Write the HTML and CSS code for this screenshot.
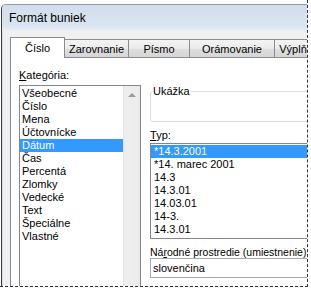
FILE: index.html
```html
<!DOCTYPE html>
<html>
  <head>
    <title>Formát buniek</title>
    <link rel="stylesheet" href="styles.css">
  </head>
  <body>
    <div class="frame">
      <div class="window">
        <div class="titlebar">Formát buniek</div>

        <div class="face">
          <div class="tabs">
            <div class="tab active tab-cislo">Číslo</div>
            <div class="tab tab-zarovnanie">Zarovnanie</div>
            <div class="tab tab-pismo">Písmo</div>
            <div class="tab tab-oramovanie">Orámovanie</div>
            <div class="tab tab-vypln">Výplň</div>
          </div>

          <div class="pane">
            <div class="col-left">
              <div class="label"><u>K</u>ategória:</div>
              <div class="listbox category">
                <ul class="items">
                  <li>Všeobecné</li>
                  <li>Číslo</li>
                  <li>Mena</li>
                  <li>Účtovnícke</li>
                  <li class="selected">Dátum</li>
                  <li>Čas</li>
                  <li>Percentá</li>
                  <li>Zlomky</li>
                  <li>Vedecké</li>
                  <li>Text</li>
                  <li>Špeciálne</li>
                  <li>Vlastné</li>
                </ul>
                <div class="scrollbar">
                  <div class="scroll-btn"><span class="arrow-up"></span></div>
                </div>
              </div>
            </div>

            <div class="col-right">
              <fieldset class="sample">
                <legend>Ukážka</legend>
              </fieldset>

              <div class="label label-typ"><u>T</u>yp:</div>
              <ul class="listbox items types">
                <li class="selected">*14.3.2001</li>
                <li>*14. marec 2001</li>
                <li>14.3</li>
                <li>14.3.01</li>
                <li>14.03.01</li>
                <li>14-3.</li>
                <li>14.3.01</li>
              </ul>

              <div class="label label-locale">Ná<u>r</u>odné prostredie (umiestnenie):</div>
              <div class="combo">slovenčina</div>
            </div>
          </div>
        </div>
      </div>
    </div>
  </body>
</html>
```

FILE: styles.css
```css
body {
  margin: 0;
  background: #fff;
  font-family: 'Liberation Sans', Arial, sans-serif;
  font-size: 11px;
  color: #000;
}

.frame {
  width: 307px;
  height: 286px;
  border-right: 1px dashed #333;
  border-bottom: 1px dashed #333;
  overflow: hidden;
}

.window {
  margin: 4px 0 0 1px;
  width: 340px;
  height: 300px;
  border-left: 1px solid #3a3a3a;
  border-top: 1px solid #8f99a5;
  border-top-left-radius: 5px;
  background: #f0f0f0;
  overflow: hidden;
}

.titlebar {
  height: 25px;
  padding-left: 7px;
  line-height: 27px;
  font-size: 12px;
  background: linear-gradient(#d2deed, #d9e4f1 80%, #e3ebf5);
}

.face {
  padding: 7px 0 0 8px;
  box-shadow: inset 1px 0 #d6e1ef;
}

/* tabs */
.tabs {
  display: flex;
  height: 20px;
}

.tab {
  box-sizing: border-box;
  height: 18px;
  margin-top: 2px;
  margin-left: -1px;
  padding-top: 1px;
  border: 1px solid #898c95;
  border-bottom: none;
  text-align: center;
  line-height: 16px;
  white-space: nowrap;
  background: linear-gradient(#f3f3f3, #ebebeb 50%, #dedede 51%, #d6d6d6);
}

.tab.active {
  position: relative;
  z-index: 1;
  height: 21px;
  margin-top: 0;
  margin-left: 0;
  padding-top: 0;
  line-height: 20px;
  background: #fff;
}

.tab-cislo { width: 55px; }
.tab-zarovnanie { width: 65px; }
.tab-pismo { width: 62px; }
.tab-oramovanie { width: 86px; }
.tab-vypln { width: 38px; flex-shrink: 0; }

.pane {
  box-sizing: border-box;
  height: 260px;
  padding: 11px 0 0 8px;
  border: 1px solid #898c95;
  background: #fff;
  display: flex;
  gap: 9px;
}

.label {
  line-height: 13px;
  white-space: nowrap;
}

/* list boxes */
.col-left {
  width: 122px;
  flex-shrink: 0;
}

.listbox {
  box-sizing: border-box;
  border: 1px solid #828790;
  background: #fff;
}

.category {
  margin-top: 3px;
  height: 220px;
  display: flex;
}

.items {
  list-style: none;
  margin: 0;
  padding: 1px 0;
  flex: 1;
}

.items li {
  height: 13px;
  line-height: 13px;
  padding-left: 2px;
  white-space: nowrap;
}

.items li.selected {
  background: #3399ff;
  color: #fff;
}

.scrollbar {
  width: 17px;
  background: linear-gradient(90deg, #e2e2e2, #eeeeee 2px, #ececec 15px, #e4e4e4);
}

.scroll-btn {
  height: 17px;
  display: flex;
  align-items: center;
  justify-content: center;
}

.arrow-up {
  width: 0;
  height: 0;
  border-left: 4px solid transparent;
  border-right: 4px solid transparent;
  border-bottom: 4px solid #9a9a9a;
}

/* right column */
.col-right {
  width: 200px;
  flex-shrink: 0;
}

.sample {
  box-sizing: border-box;
  height: 37px;
  margin: 16px 0 0;
  padding: 0 0 0 1px;
  min-width: 0;
  border: 1px solid #d5dfe5;
  border-radius: 3px;
}

.sample legend {
  padding: 0 1px;
  line-height: 13px;
}

.label-typ {
  margin-top: 7px;
}

.types {
  margin-top: 1px;
  padding: 1px 0 2px;
}

.types li {
  padding-left: 3px;
}

.label-locale {
  margin-top: 7px;
  line-height: 12px;
  font-size: 10.5px;
}

.combo {
  box-sizing: border-box;
  height: 20px;
  padding: 2px 0 0 2px;
  line-height: 15px;
  border: 1px solid #a5acb5;
  background: #fff;
}
```
